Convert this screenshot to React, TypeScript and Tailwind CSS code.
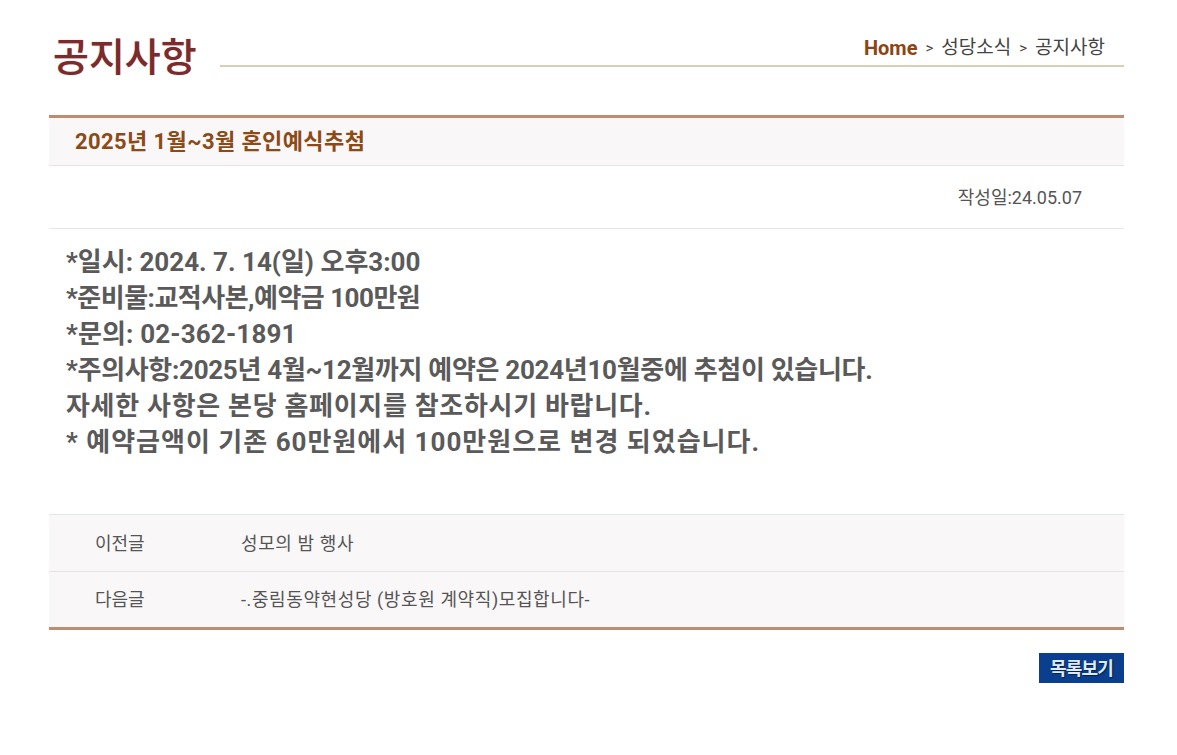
import React from 'react';

const kr = "font-['Roboto','Noto_Sans_CJK_KR',sans-serif]";

// tracking per line, tuned so each line runs as long as in the original
const lines = [
  { text: '*일시: 2024. 7. 14(일) 오후3:00', cls: 'tracking-[0px]' },
  { text: '*준비물:교적사본,예약금 100만원', cls: 'tracking-[-0.5px]' },
  { text: '*문의: 02-362-1891', cls: 'tracking-[0.15px]' },
  { text: '*주의사항:2025년 4월~12월까지 예약은 2024년10월중에 추첨이 있습니다.', cls: 'tracking-[-0.3px]' },
  { text: '자세한 사항은 본당 홈페이지를 참조하시기 바랍니다.', cls: 'tracking-[0.7px]' },
  { text: '* 예약금액이 기존 60만원에서 100만원으로 변경 되었습니다.', cls: 'tracking-[1px]' },
];

const nav = [
  { label: '이전글', title: '성모의 밤 행사' },
  { label: '다음글', title: '-.중림동약현성당 (방호원 계약직)모집합니다-' },
];

export default function App() {
  return (
    <div className={`min-h-[755px] bg-white ${kr}`}>
      <div className="ml-[49px] w-[1075px] pt-[36px]">
        {/* page heading */}
        <div className="flex items-start">
          <h1 className="w-[171px] pl-[4px] text-[39px] leading-[44px] font-medium text-[#7b2b2b] [text-shadow:0_0_1px_rgba(123,43,43,0.5)]">
            공지사항
          </h1>
          <div className="flex-1">
            <div className="flex items-center justify-end gap-[8px] pr-[19px] text-[19px] leading-[24px] text-[#444]">
              <span className="text-[20px] font-bold text-[#8b4513]">Home</span>
              <span className="text-[15px]">&gt;</span>
              <span>성당소식</span>
              <span className="text-[15px]">&gt;</span>
              <span>공지사항</span>
            </div>
            <div className="mt-[5px] h-[2px] bg-[#d9cfb4]" />
          </div>
        </div>

        {/* article */}
        <div className="mt-[35px] border-t-[3px] border-[#bb8d72]">
          <div className="flex h-[48px] items-center border-b border-[#e4e4e4] bg-[#f9f7f7] pl-[26px]">
            <h2 className="text-[22px] font-bold tracking-[0.4px] text-[#8b4a16]">2025년 1월~3월 혼인예식추첨</h2>
          </div>
          <div className="flex h-[63px] items-center justify-end border-b border-[#e8e8e8] pr-[42px] text-[18px] text-[#555]">
            작성일:24.05.07
          </div>
          <div className="h-[285px] pl-[17px] pt-[15px] text-[26px] leading-[36px] font-bold text-[#5a5a5a]">
            {lines.map((l) => (
              <p key={l.text} className={l.cls}>
                {l.text}
              </p>
            ))}
          </div>
        </div>

        {/* prev / next */}
        <div className="border-t border-b-[3px] border-t-[#e4e4e4] border-b-[#bb8d72] bg-[#f9f7f8]">
          {nav.map((n, i) => (
            <div
              key={n.label}
              className={`flex h-[56px] items-center text-[18px] text-[#555] ${i > 0 ? 'border-t border-[#e4e4e4]' : ''}`}
            >
              <span className="w-[192px] shrink-0 pl-[46px]">{n.label}</span>
              <span className="tracking-[0.6px]">{n.title}</span>
            </div>
          ))}
        </div>

        <div className="mt-[23px] flex justify-end">
          <button className="h-[30px] w-[85px] bg-[#0a3f8f] text-[18px] font-bold tracking-[-0.8px] text-[#dfe9f7] [text-shadow:1px_1px_1px_rgba(0,0,0,0.5)]">
            목록보기
          </button>
        </div>
      </div>
    </div>
  );
}
